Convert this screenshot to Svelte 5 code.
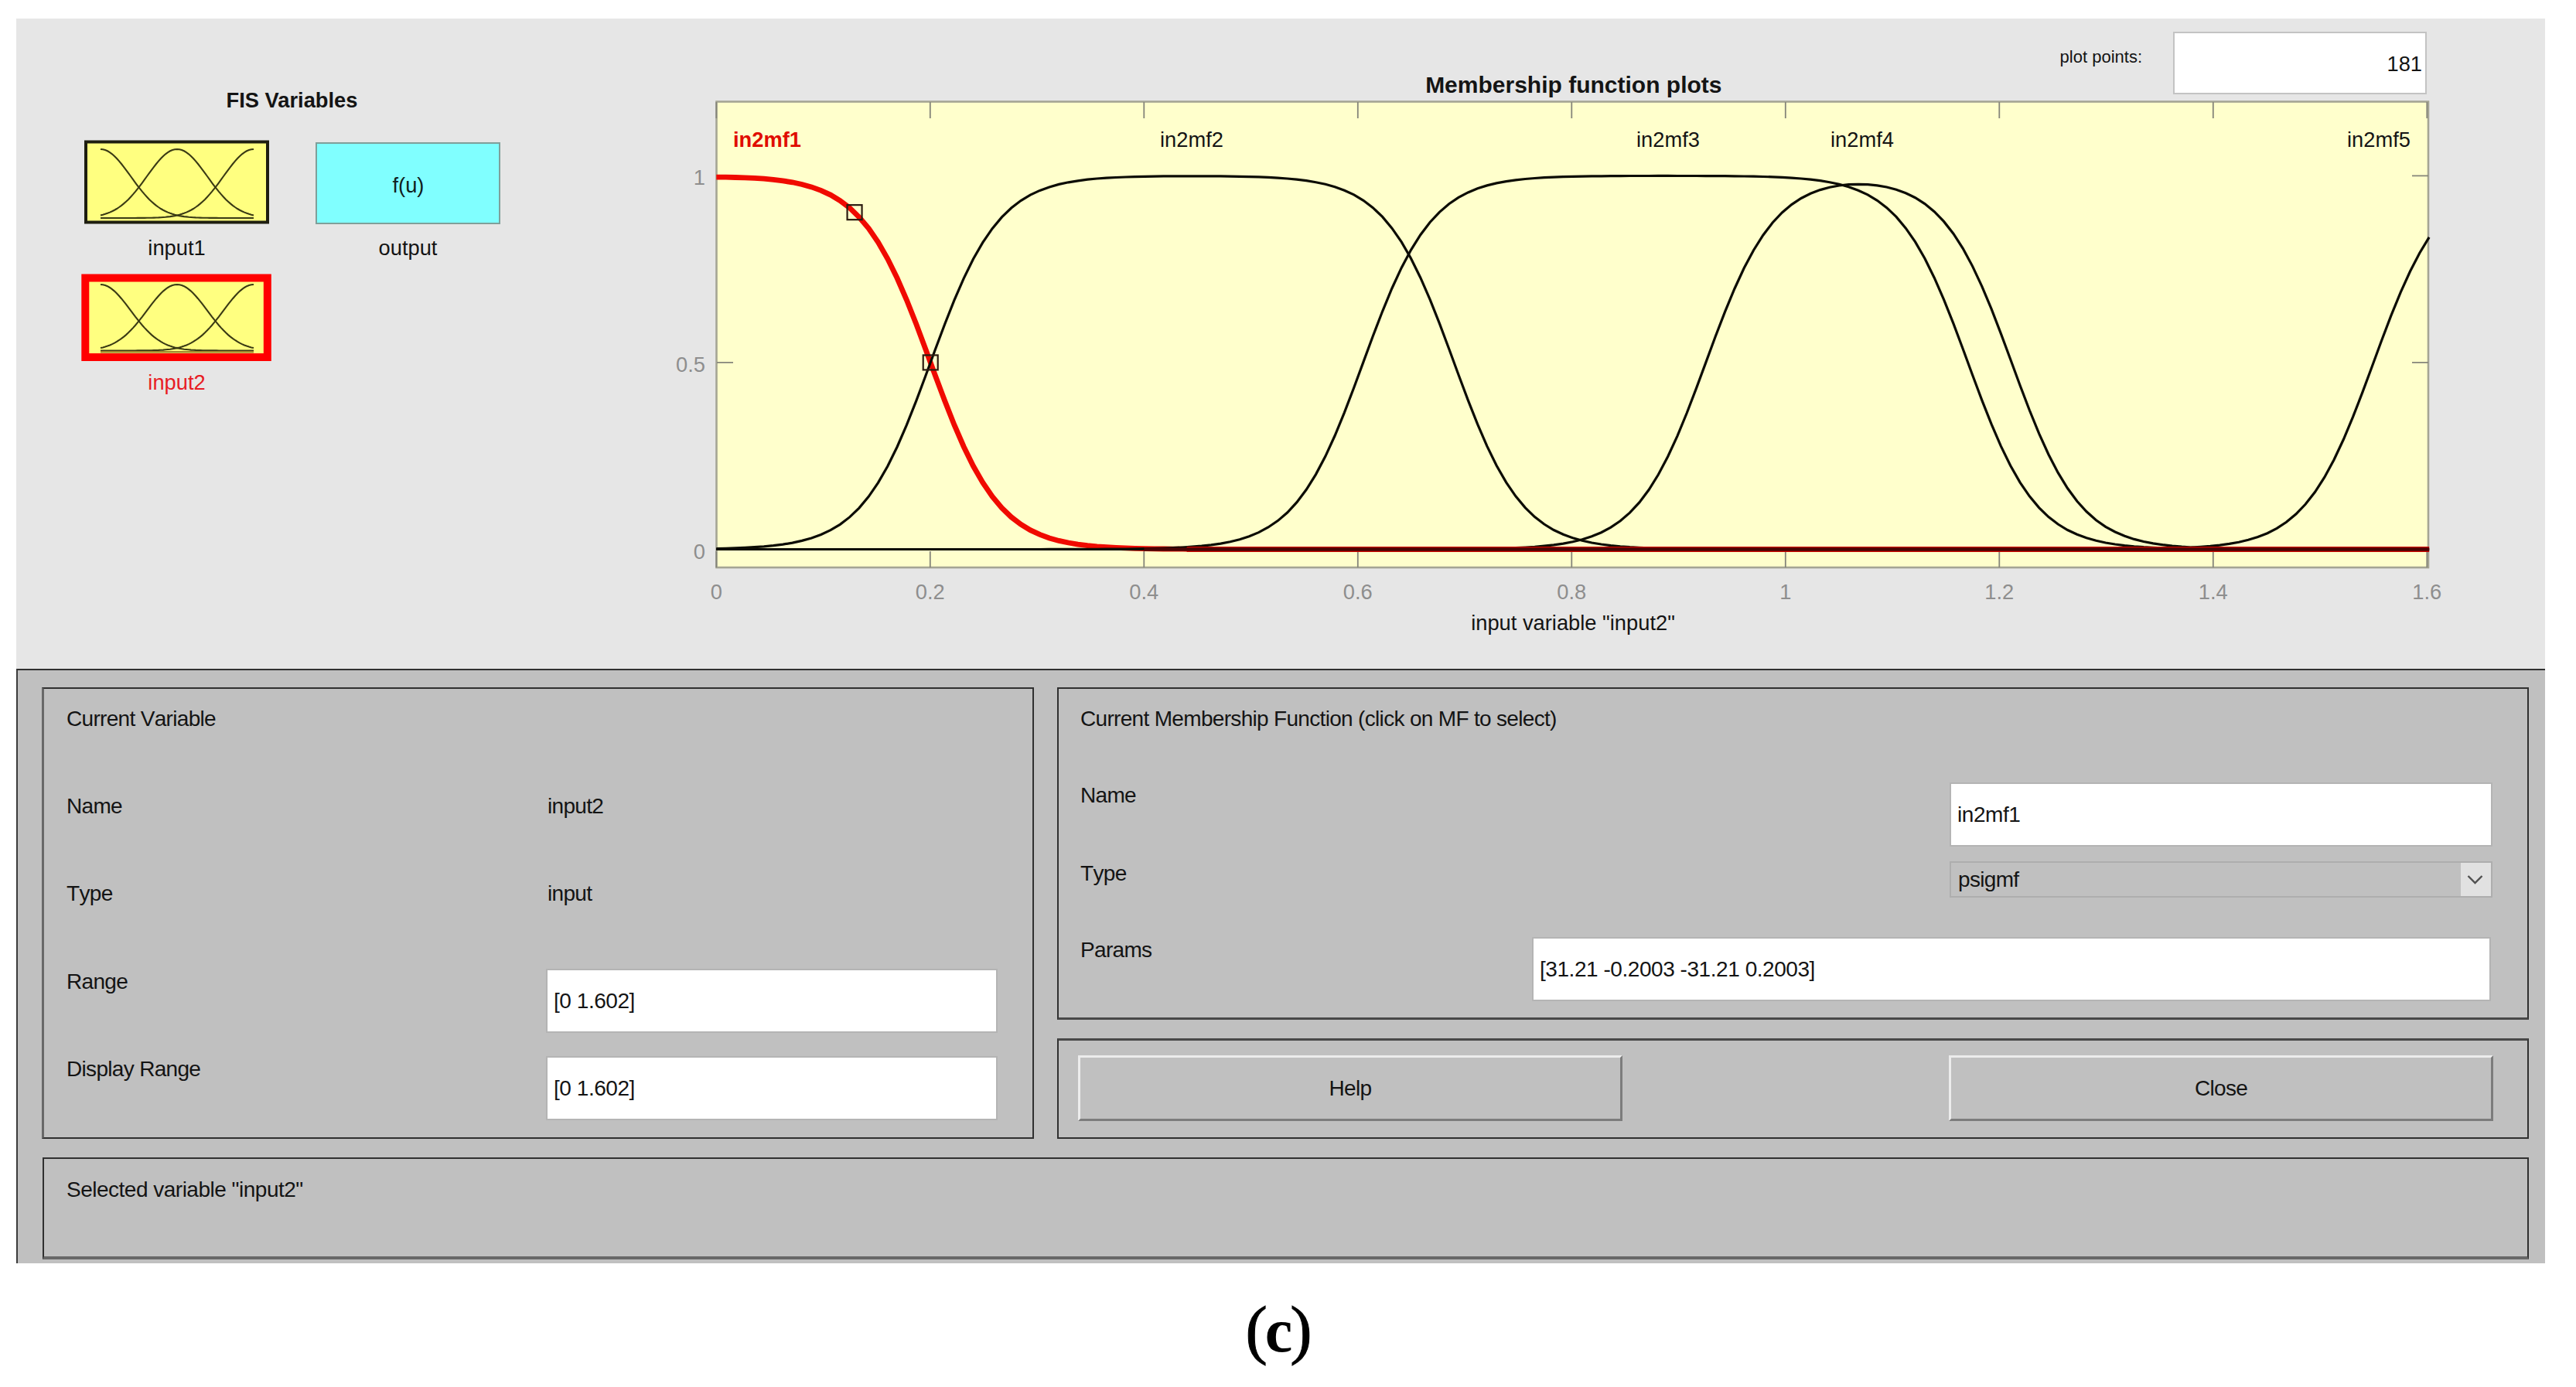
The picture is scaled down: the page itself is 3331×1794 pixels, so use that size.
<script lang="ts">
  type Mf = { name: string; rise: number; fall: number; labelX: number };

  const SLOPE = 31.21;
  const RANGE_MAX = 1.602;
  const POINTS = 181;

  const mfs: Mf[] = [
    { name: "in2mf1", rise: -0.2003, fall: 0.2003, labelX: 992 },
    { name: "in2mf2", rise: 0.2003, fall: 0.69, labelX: 1541 },
    { name: "in2mf3", rise: 0.605, fall: 1.1706, labelX: 2157 },
    { name: "in2mf4", rise: 0.9255, fall: 1.2115, labelX: 2408 },
    { name: "in2mf5", rise: 1.55, fall: 2.2, labelX: 3076 },
  ];
  const selected = "in2mf1";

  const xTicks = [0, 0.2, 0.4, 0.6, 0.8, 1, 1.2, 1.4, 1.6];
  const yTicks = [0, 0.5, 1];
  const handles = [
    [0.1293, 0.902],
    [0.2003, 0.5],
  ];

  const px = (x: number) => 926.3 + x * 1382.5;
  const py = (y: number) => 710.5 - y * 483.2;

  function psigmf(x: number, mf: Mf) {
    const up = 1 / (1 + Math.exp(-SLOPE * (x - mf.rise)));
    const down = 1 / (1 + Math.exp(SLOPE * (x - mf.fall)));
    return up * down;
  }

  function curve(mf: Mf) {
    const pts: string[] = [];
    for (let i = 0; i < POINTS; i++) {
      const x = (RANGE_MAX * i) / (POINTS - 1);
      pts.push(`${px(x).toFixed(1)},${py(psigmf(x, mf)).toFixed(1)}`);
    }
    return pts.join(" ");
  }

  // Small gaussian used inside the variable icons
  function bell(center: number, top: number, bottom: number) {
    const pts: string[] = [];
    for (let x = 0; x <= 198; x += 3) {
      const g = Math.exp(-((x - center) ** 2) / (2 * 39 ** 2));
      pts.push(`${x + 21},${(bottom - g * (bottom - top)).toFixed(1)}`);
    }
    return pts.join(" ");
  }

  let plotPoints = "181";
  let range = "[0 1.602]";
  let displayRange = "[0 1.602]";
  let mfName = "in2mf1";
  let params = "[31.21 -0.2003 -31.21 0.2003]";
</script>

<div class="figure">
  <div class="top">
    <!-- Variable palette -->
    <div class="palette">
      <h2>FIS Variables</h2>
      <div class="vars">
        <div class="var">
          <svg class="icon" width="240" height="110" viewBox="0 0 240 110">
            <rect x="2" y="2.5" width="235" height="104" fill="#ffff80" stroke="#1e1e10" stroke-width="4" />
            {#each [0, 99, 198] as c}
              <polyline points={bell(c, 12, 101)} class="bell" />
            {/each}
          </svg>
          <span>input1</span>
        </div>
        <div class="var">
          <svg class="icon" width="240" height="110" viewBox="0 0 240 110">
            <rect x="1" y="4" width="237" height="104" fill="#80ffff" stroke="#7f9f9a" stroke-width="2" />
            <text x="120" y="68" class="fu">f(u)</text>
          </svg>
          <span>output</span>
        </div>
        <div class="var active">
          <svg class="icon" width="248" height="116" viewBox="-4 -4 248 116">
            <rect x="1.3" y="2.5" width="235.5" height="102.5" fill="#ffff80" stroke="#ff0000" stroke-width="10" />
            {#each [0, 99, 198] as c}
              <polyline points={bell(c, 11, 96.5)} class="bell" />
            {/each}
            <path d="M21 98.2H219" class="base" />
          </svg>
          <span>input2</span>
        </div>
      </div>
    </div>

    <!-- Plot area -->
    <div class="plot">
      <div class="points">
        <label for="points">plot points:</label>
        <input id="points" type="text" bind:value={plotPoints} />
      </div>
      <svg class="axes" width="2420" height="841" viewBox="871 24 2420 841">
        <rect x="926.5" y="131.5" width="2213.5" height="602.5" fill="#ffffcc" stroke="#a5a594" stroke-width="2.6" />
        {#each xTicks as t}
          <path d="M{px(t)} 132v21M{px(t)} 734v-21" class="tick" />
          <text x={px(t)} y="775" class="tick-label">{t}</text>
        {/each}
        {#each yTicks as t}
          <path d="M927 {py(t)}h21M3140 {py(t)}h-21" class="tick" />
          <text x="912" y={py(t) + 12} class="tick-label end">{t}</text>
        {/each}

        <polyline points={curve(mfs[0])} class="mf selected" />
        {#each mfs.filter((mf) => mf.name !== selected) as mf}
          <polyline points={curve(mf)} class="mf" />
        {/each}
        <!-- all curves run together along zero -->
        <path d="M{px(0.44)} {py(0)}H{px(RANGE_MAX)}" class="zero-edge" />
        <path d="M{px(0.4)} {py(0)}H{px(RANGE_MAX)}" class="zero" />
        {#each handles as [hx, hy]}
          <rect x={px(hx) - 9.5} y={py(hy) - 9.5} width="19" height="19" class="handle" />
        {/each}
        {#each mfs as mf}
          <text x={mf.labelX} y="190" class="mf-label" class:current={mf.name === selected}>{mf.name}</text>
        {/each}

        <text x="2034.8" y="120" class="title">Membership function plots</text>
        <text x="2034" y="815" class="x-label">input variable "input2"</text>
      </svg>
    </div>
  </div>

  <div class="bottom">
    <section class="panel variable">
      <h3>Current Variable</h3>
      <div class="row"><span>Name</span><span>input2</span></div>
      <div class="row"><span>Type</span><span>input</span></div>
      <div class="row">
        <label for="range">Range</label>
        <input id="range" type="text" bind:value={range} />
      </div>
      <div class="row">
        <label for="display">Display Range</label>
        <input id="display" type="text" bind:value={displayRange} />
      </div>
    </section>

    <section class="panel function">
      <h3>Current Membership Function (click on MF to select)</h3>
      <div class="row name">
        <label for="mfname">Name</label>
        <input id="mfname" type="text" bind:value={mfName} />
      </div>
      <div class="row type">
        <span>Type</span>
        <div class="popup">
          <span>psigmf</span>
          <svg width="39" height="43" viewBox="0 0 39 43">
            <rect width="39" height="43" fill="#e1e1e1" />
            <path d="M9.500 17l9 9 9-9" fill="none" stroke="#505050" stroke-width="2.4" />
          </svg>
        </div>
      </div>
      <div class="row params">
        <label for="params">Params</label>
        <input id="params" type="text" bind:value={params} />
      </div>
    </section>

    <section class="panel actions">
      <button>Help</button>
      <button>Close</button>
    </section>

    <section class="panel status">Selected variable "input2"</section>
  </div>
</div>
<div class="caption">(<b>c</b>)</div>

<style>
  :global(body) {
    background: #fff;
  }

  .figure {
    width: 3270px;
    margin: 0 0 0 21px;
    padding-top: 24px;
    font-family: "Liberation Sans", Arial, sans-serif;
    font-size: 27.3px;
    color: #141414;
  }

  .top {
    display: flex;
    height: 841px;
    background: #e6e6e6;
  }

  .palette {
    width: 850px;
    padding: 90px 0 0 88px;
    box-sizing: border-box;
  }

  h2 {
    width: 537px;
    margin: 0 0 35px;
    font-size: 27.3px;
    line-height: 32px;
    text-align: center;
  }

  .vars {
    display: grid;
    grid-template-columns: 239px 239px;
    column-gap: 60px;
    row-gap: 15px;
  }

  .var {
    display: flex;
    flex-direction: column;
    align-items: center;
    height: 160px;
  }

  .var span {
    margin-top: 14px;
    line-height: 32px;
  }

  .var.active {
    color: #e81c24;
  }

  .var.active .icon {
    margin: -3px -4px -4px;
  }

  .icon {
    display: block;
    flex: none;
  }

  .bell {
    fill: none;
    stroke: #3a3a14;
    stroke-width: 2.1;
  }

  .base {
    fill: none;
    stroke: #a08a30;
    stroke-width: 2.6;
  }

  .fu {
    text-anchor: middle;
    fill: #102020;
  }

  .plot {
    position: relative;
    width: 2420px;
  }

  .points {
    position: absolute;
    top: 17px;
    right: 153px;
    display: flex;
    gap: 40px;
    font-size: 22px;
  }

  .points label {
    padding-top: 20px;
    line-height: 26px;
  }

  .points input {
    width: 328px;
    height: 81px;
    padding: 2px 4px 0;
    border: 2px solid #c3c3c3;
    font-size: 27.3px;
    text-align: right;
  }

  .axes {
    display: block;
  }

  .tick {
    fill: none;
    stroke: #85857a;
    stroke-width: 1.8;
  }

  .tick-label {
    fill: #8e8e8e;
    text-anchor: middle;
  }

  .tick-label.end {
    text-anchor: end;
  }

  .mf {
    fill: none;
    stroke: #0c0c04;
    stroke-width: 3.2;
  }

  .mf.selected {
    stroke: #f00a00;
    stroke-width: 6.8;
  }

  .zero-edge {
    stroke: #d00800;
    stroke-width: 7;
  }

  .zero {
    stroke: #480404;
    stroke-width: 4.4;
  }

  .handle {
    fill: none;
    stroke: #2c1c10;
    stroke-width: 2.2;
  }

  .mf-label,
  .title,
  .x-label {
    text-anchor: middle;
    fill: #141414;
  }

  .mf-label.current {
    font-weight: bold;
    fill: #e00c00;
  }

  .title {
    font-size: 30px;
    font-weight: bold;
  }

  .bottom {
    display: grid;
    grid-template-columns: 1283px 1903px;
    grid-template-rows: 430px 130px 132px;
    column-gap: 29px;
    row-gap: 24px;
    align-content: start;
    box-sizing: border-box;
    height: 769px;
    padding: 22px 0 0 32px;
    background: #c0c0c0;
    border-top: 2px solid #303030;
    border-left: 2px solid #3c3c3c;
    font-size: 28px;
    font-kerning: none;
    letter-spacing: -0.68px;
  }

  .panel {
    box-sizing: border-box;
    border: 2px solid #303030;
  }

  h3 {
    margin: 0;
    font-size: inherit;
    font-weight: normal;
    line-height: 32px;
  }

  .row {
    display: flex;
    line-height: 32px;
  }

  input {
    box-sizing: border-box;
    height: 83px;
    padding: 0 8px;
    border: 2px solid #b4b4b4;
    border-radius: 0;
    background: #fff;
    font: inherit;
    font-size: 28px;
    letter-spacing: inherit;
    color: #141414;
  }

  .bottom input {
    letter-spacing: -0.45px;
  }

  .variable {
    grid-row: 1 / 3;
    margin: 0 1px 0 -1px;
    padding: 23px 0 0 29px;
    border-left: 3px solid #686868;
  }

  .variable .row > :first-child {
    width: 622px;
  }

  .variable .row,
  .variable h3 {
    height: 113px;
  }

  .variable .row:nth-of-type(2) {
    height: 114px;
  }

  .variable input {
    width: 584px;
    margin: -1px 0 0 -2px;
  }

  .function {
    padding: 23px 45px 0 28px;
    border-bottom: 3px solid #484848;
  }

  .function .row {
    justify-content: space-between;
  }

  .function h3 {
    height: 99px;
  }

  .function .name {
    height: 101px;
  }

  .function .type {
    height: 99px;
  }

  .name input {
    width: 702px;
    margin-top: -1px;
  }

  .popup {
    display: flex;
    justify-content: space-between;
    box-sizing: border-box;
    width: 702px;
    height: 47px;
    padding-left: 9px;
    border: 2px solid #aeaeae;
    line-height: 44px;
  }

  .params input {
    width: 1240px;
    margin: -1px 2px 0 0;
  }

  .actions {
    display: flex;
    justify-content: space-between;
    padding: 19px 44px 0 25px;
    border-top: 3px solid #484848;
  }

  button {
    width: 704px;
    height: 85px;
    padding: 0;
    border: 3px solid;
    border-color: #ececec #7c7c7c #7c7c7c #ececec;
    background: #c0c0c0;
    font: inherit;
    letter-spacing: inherit;
    color: #141414;
  }

  .status {
    grid-column: 1 / 3;
    padding: 24px 29px;
    border-bottom: 4px solid #686868;
    line-height: 32px;
    letter-spacing: -0.5px;
  }

  .caption {
    width: 90px;
    margin: 35px 0 0 1607px;
    font-family: "Liberation Serif", serif;
    font-size: 85px;
    line-height: 100px;
    letter-spacing: -3px;
    text-align: center;
    color: #000;
    -webkit-text-stroke: 1px #000;
  }

  .caption b {
    font-size: 80px;
    -webkit-text-stroke: 0;
  }
</style>
